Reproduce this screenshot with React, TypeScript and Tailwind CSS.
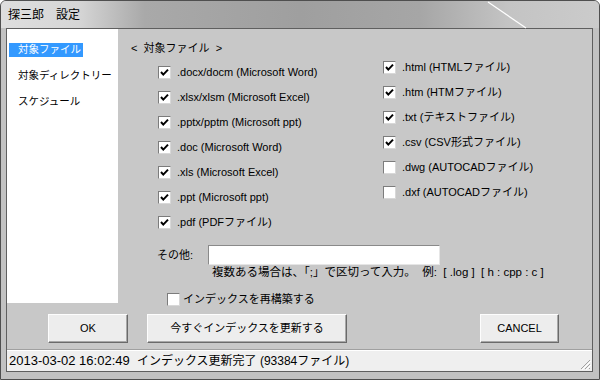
const leftTypes: [string, boolean][] = [
  ['.docx/docm (Microsoft Word)', true],
  ['.xlsx/xlsm (Microsoft Excel)', true],
  ['.pptx/pptm (Microsoft ppt)', true],
  ['.doc (Microsoft Word)', true],
  ['.xls (Microsoft Excel)', true],
  ['.ppt (Microsoft ppt)', true],
  ['.pdf (PDFファイル)', true],
]

const rightTypes: [string, boolean][] = [
  ['.html (HTMLファイル)', true],
  ['.htm (HTMファイル)', true],
  ['.txt (テキストファイル)', true],
  ['.csv (CSV形式ファイル)', true],
  ['.dwg (AUTOCADファイル)', false],
  ['.dxf (AUTOCADファイル)', false],
]

function Check({ checked }: { checked: boolean }) {
  return (
    <span className="w-[13px] h-[13px] shrink-0 bg-white border border-t-[#7c7c7c] border-l-[#7c7c7c] border-r-[#d8d8d8] border-b-[#d8d8d8] flex items-center justify-center">
      {checked && (
        <svg width="11" height="11" viewBox="0 0 11 11">
          <path d="M2 5 L4.3 7.6 L9 2.6" stroke="#000" strokeWidth="2" fill="none" />
        </svg>
      )}
    </span>
  )
}

function Row({ label, checked }: { label: string; checked: boolean }) {
  return (
    <div className="h-[25px] flex items-center gap-[6px]">
      <Check checked={checked} />
      <span className="whitespace-pre">{label}</span>
    </div>
  )
}

function Button({ children, className }: { children: React.ReactNode; className: string }) {
  return (
    <button className={`h-[29px] bg-[#ededed] border border-t-[#fdfdfd] border-l-[#fdfdfd] border-r-[#6a6a6a] border-b-[#6a6a6a] shadow-[inset_-1px_-1px_0_#a8a8a8] text-[11px] text-black ${className}`}>
      {children}
    </button>
  )
}

export default function App() {
  return (
    <div className="w-[600px] h-[380px] relative flex flex-col bg-[#c2c2c2] border border-[#4f4f4f] rounded-t-[6px] overflow-hidden text-black font-['Liberation_Sans','Noto_Sans_CJK_JP',sans-serif]">
      {/* title bar */}
      <div className="h-[27px] shrink-0 flex items-center pl-[7px] text-[12px] bg-[linear-gradient(90deg,#dedede_0%,#d6d6d6_13%,#a9a9a9_24%,#9f9f9f_50%,#a6a6a6_70%,#c4c4c4_85%,#cbcbcb_100%)]">
        <span className="whitespace-pre">探三郎　設定</span>
      </div>
      <svg className="absolute left-[486px] top-0" width="42" height="28" viewBox="0 0 42 28">
        <path d="M1 1 L39 27" stroke="#ffffff" strokeWidth="1.2" />
      </svg>

      {/* client */}
      <div className="flex-1 flex pl-[5px] pr-[6px] pb-[7px]">
        <div className="flex-1 flex flex-col border border-[#5f5f5f] bg-[#c8c8c8]">
          <div className="h-[320px] flex flex-col">
            <div className="h-[274px] flex">
              {/* left list */}
              <div className="w-[111px] shrink-0 bg-white pt-[13px] text-[10.5px]">
                <div className="h-[26px]">
                  <span className="ml-[2px] inline-flex items-center h-[14px] pl-[9px] pr-[2px] bg-[#3399ff] text-white">対象ファイル</span>
                </div>
                <div className="h-[26px]">
                  <span className="ml-[2px] inline-flex items-center h-[14px] pl-[9px]">対象ディレクトリー</span>
                </div>
                <div className="h-[26px]">
                  <span className="ml-[2px] inline-flex items-center h-[14px] pl-[9px]">スケジュール</span>
                </div>
              </div>

              {/* content */}
              <div className="flex-1 flex flex-col text-[11px]">
                <div className="flex">
                  <div className="w-[265px] shrink-0 pl-[13px] pt-[12px]">
                    <div className="h-[14px] flex items-center whitespace-pre">{'<  対象ファイル  >'}</div>
                    <div className="ml-[27px] mt-[5px]">
                      {leftTypes.map(([l, c]) => (
                        <Row key={l} label={l} checked={c} />
                      ))}
                    </div>
                  </div>
                  <div className="pt-[26px]">
                    {rightTypes.map(([l, c]) => (
                      <Row key={l} label={l} checked={c} />
                    ))}
                  </div>
                </div>

                <div className="mt-[10px] h-[20px] flex items-center pl-[39px]">
                  <span className="w-[51px]">その他:</span>
                  <div className="w-[232px] h-[20px] bg-white border border-t-[#8a8a8a] border-l-[#8a8a8a] border-r-[#e6e6e6] border-b-[#e6e6e6]" />
                </div>
                <div className="mt-[1px] h-[14px] flex items-center pl-[94px] whitespace-pre text-[11.5px]">
                  複数ある場合は、「;」で区切って入力。  例:  [ .log ]  [ h : cpp : c ]
                </div>
                <div className="mt-[12px] h-[14px] flex items-center pl-[49px] gap-[3px]">
                  <Check checked={false} />
                  <span>インデックスを再構築する</span>
                </div>
              </div>
            </div>

            {/* buttons */}
            <div className="flex mt-[11px] pl-[41px]">
              <Button className="w-[80px]">OK</Button>
              <Button className="w-[200px] ml-[19px]">今すぐインデックスを更新する</Button>
              <Button className="w-[79px] ml-[133px]">CANCEL</Button>
            </div>
          </div>

          {/* status bar */}
          <div className="flex-1 relative flex items-center pl-[2px] bg-[#efefef] border-t border-t-[#a0a0a0] shadow-[inset_0_1px_0_#ffffff]">
            <span className="whitespace-pre text-[13px]">2013-03-02 16:02:49  </span>
            <span className="whitespace-pre text-[12px]">インデックス更新完了 (93384ファイル)</span>
            <svg className="absolute right-[1px] bottom-[1px]" width="12" height="12" viewBox="0 0 12 12">
              <path d="M11 2 L2 11 M11 6 L6 11 M11 10 L10 11" stroke="#a0a0a0" strokeWidth="1" />
              <path d="M12 3 L3 12 M12 7 L7 12" stroke="#ffffff" strokeWidth="1" />
            </svg>
          </div>
        </div>
      </div>
    </div>
  )
}
